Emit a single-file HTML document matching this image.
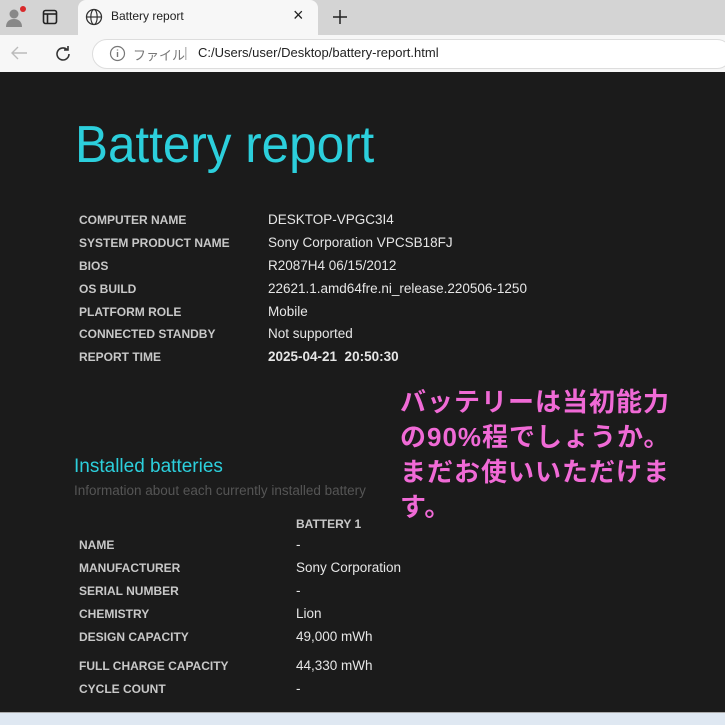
<!DOCTYPE html>
<html><head><meta charset="utf-8"><style>
*{margin:0;padding:0;box-sizing:border-box}
body{width:725px;height:725px;overflow:hidden;background:#1b1b1b;font-family:"Liberation Sans","Noto Sans CJK JP",sans-serif;position:relative}
.a{position:absolute;white-space:nowrap}
.tabbar{position:absolute;left:0;top:0;width:725px;height:35px;background:#d4d4d4}
.tab{position:absolute;left:78px;top:0;width:240px;height:35px;background:#f7f7f7;border-radius:8px 8px 0 0}
.nav{position:absolute;left:0;top:35px;width:725px;height:37px;background:#f7f7f7}
.url{position:absolute;left:92px;top:39px;width:640px;height:30px;border-radius:15px;background:#fff;border:1px solid #ddd}
.l{color:#c8c8c8;font-size:12px;font-weight:bold;transform-origin:left;}
.v{color:#e6e6e6;font-size:13.5px}
</style></head><body>
<div class="tabbar"></div>
<div class="tab"></div>
<div class="nav"></div>
<div class="url"></div>
<svg class="a" style="left:3px;top:5px" width="26" height="24"><circle cx="11" cy="9" r="4.5" fill="#888"/><path d="M3 22c0-6 4-8 8-8s8 2 8 8z" fill="#888"/><circle cx="20" cy="4" r="3" fill="#d9292b"/></svg>
<svg class="a" style="left:42px;top:9px" width="16" height="16"><rect x="1.5" y="1.5" width="13" height="13" rx="2" fill="none" stroke="#222" stroke-width="1.6"/><line x1="1.5" y1="5" x2="14.5" y2="5" stroke="#222" stroke-width="1.6"/><line x1="5.5" y1="5" x2="5.5" y2="14" stroke="#222" stroke-width="1.6"/></svg>
<svg class="a" style="left:85px;top:8px" width="18" height="18"><circle cx="9" cy="9" r="7.5" fill="none" stroke="#333" stroke-width="1.3"/><ellipse cx="9" cy="9" rx="3.2" ry="7.5" fill="none" stroke="#333" stroke-width="1.2"/><line x1="1.5" y1="9" x2="16.5" y2="9" stroke="#333" stroke-width="1.2"/></svg>
<div class="a" style="left:111px;top:9px;font-size:12px;color:#222">Battery report</div>
<div class="a" style="left:293px;top:5px;font-size:18px;color:#222">×</div>
<svg class="a" style="left:331px;top:8px" width="18" height="18"><path d="M9 2v14M2 9h14" stroke="#222" stroke-width="1.5"/></svg>
<svg class="a" style="left:9px;top:44px" width="20" height="18"><path d="M18 9H3M9 3L3 9l6 6" fill="none" stroke="#bbb" stroke-width="1.4"/></svg>
<svg class="a" style="left:53px;top:44px" width="20" height="20"><path d="M16 10a6 6 0 1 1-2-4.5M15 2v4h-4" fill="none" stroke="#333" stroke-width="1.6"/></svg>
<svg class="a" style="left:109px;top:45px" width="17" height="17"><circle cx="8.5" cy="8.5" r="7" fill="none" stroke="#777" stroke-width="1.2"/><path d="M8.5 7v5M8.5 4.5v1" stroke="#777" stroke-width="1.4"/></svg>
<div class="a" style="left:133px;top:45px;font-size:13px;color:#777">ファイル</div>
<div class="a" style="left:184px;top:44px;font-size:14px;color:#aaa">|</div>
<div class="a" style="left:198px;top:45px;font-size:13px;color:#222">C:/Users/user/Desktop/battery-report.html</div>

<div class="a" style="left:75px;top:115px;font-size:52px;color:#2ccfdc;transform:scaleX(0.95);transform-origin:left">Battery report</div>

<div class="a l" style="left:79px;top:213px">COMPUTER NAME</div><div class="a v" style="left:268px;top:212px">DESKTOP-VPGC3I4</div>
<div class="a l" style="left:79px;top:236px">SYSTEM PRODUCT NAME</div><div class="a v" style="left:268px;top:235px">Sony Corporation VPCSB18FJ</div>
<div class="a l" style="left:79px;top:259px">BIOS</div><div class="a v" style="left:268px;top:258px">R2087H4 06/15/2012</div>
<div class="a l" style="left:79px;top:282px">OS BUILD</div><div class="a v" style="left:268px;top:281px">22621.1.amd64fre.ni_release.220506-1250</div>
<div class="a l" style="left:79px;top:305px">PLATFORM ROLE</div><div class="a v" style="left:268px;top:304px">Mobile</div>
<div class="a l" style="left:79px;top:327px">CONNECTED STANDBY</div><div class="a v" style="left:268px;top:326px">Not supported</div>
<div class="a l" style="left:79px;top:350px">REPORT TIME</div><div class="a v" style="left:268px;top:349px;font-weight:bold">2025-04-21&nbsp; 20:50:30</div>

<div class="a" style="left:74px;top:456px;font-size:19px;color:#2ccfdc">Installed batteries</div>
<div class="a" style="left:74px;top:483px;font-size:13.5px;color:#555">Information about each currently installed battery</div>
<div class="a l" style="left:296px;top:517px">BATTERY 1</div>
<div class="a l" style="left:79px;top:538px">NAME</div><div class="a v" style="left:296px;top:537px">-</div>
<div class="a l" style="left:79px;top:561px">MANUFACTURER</div><div class="a v" style="left:296px;top:560px">Sony Corporation</div>
<div class="a l" style="left:79px;top:584px">SERIAL NUMBER</div><div class="a v" style="left:296px;top:583px">-</div>
<div class="a l" style="left:79px;top:607px">CHEMISTRY</div><div class="a v" style="left:296px;top:606px">Lion</div>
<div class="a l" style="left:79px;top:630px">DESIGN CAPACITY</div><div class="a v" style="left:296px;top:629px">49,000 mWh</div>
<div class="a l" style="left:79px;top:659px">FULL CHARGE CAPACITY</div><div class="a v" style="left:296px;top:658px">44,330 mWh</div>
<div class="a l" style="left:79px;top:682px">CYCLE COUNT</div><div class="a v" style="left:296px;top:681px">-</div>

<div class="a" style="left:400px;top:385px;font-size:26px;letter-spacing:1px;line-height:35px;color:#f06ad6;font-weight:bold;white-space:normal;width:325px">バッテリーは当初能力<br>の90%程でしょうか。<br>まだお使いいただけま<br>す。</div>

<div class="a" style="left:0;top:712px;width:725px;height:13px;background:#dfe8f2;border-top:1px solid #aaa"></div>
</body></html>
